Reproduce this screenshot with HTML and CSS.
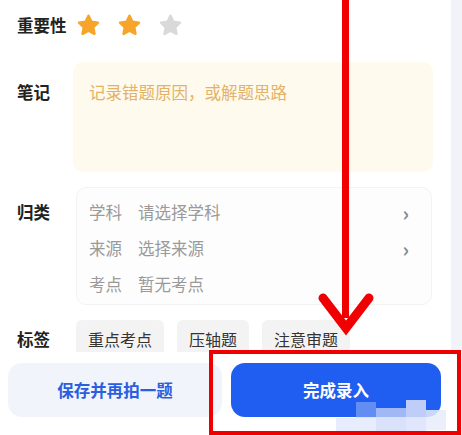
FILE: index.html
```html
<!DOCTYPE html>
<html lang="zh-CN">
<head>
    <meta charset="UTF-8">
    <title>错题录入</title>
    <link rel="stylesheet" href="styles.css">
</head>
<body>
    <div class="page">
        <div class="form">
            <!-- 重要性 -->
            <div class="row row-stars">
                <div class="label">重要性</div>
                <div class="stars">
                    <svg class="star on" viewBox="0 0 24 24"><path d="M12 2.6l2.8 5.9 6.3.8-4.6 4.4 1.2 6.3L12 16.9 6.3 20l1.2-6.3L2.9 9.3l6.3-.8z"/></svg>
                    <svg class="star on" viewBox="0 0 24 24"><path d="M12 2.6l2.8 5.9 6.3.8-4.6 4.4 1.2 6.3L12 16.9 6.3 20l1.2-6.3L2.9 9.3l6.3-.8z"/></svg>
                    <svg class="star" viewBox="0 0 24 24"><path d="M12 2.6l2.8 5.9 6.3.8-4.6 4.4 1.2 6.3L12 16.9 6.3 20l1.2-6.3L2.9 9.3l6.3-.8z"/></svg>
                </div>
            </div>

            <!-- 笔记 -->
            <div class="row row-note">
                <div class="label">笔记</div>
                <div class="note-box">记录错题原因，或解题思路</div>
            </div>

            <!-- 归类 -->
            <div class="row row-class">
                <div class="label">归类</div>
                <div class="class-box">
                    <div class="class-item"><span class="key">学科</span><span class="val">请选择学科</span><span class="arrow">&#8250;</span></div>
                    <div class="class-item"><span class="key">来源</span><span class="val">选择来源</span><span class="arrow">&#8250;</span></div>
                    <div class="class-item"><span class="key">考点</span><span class="val">暂无考点</span></div>
                </div>
            </div>

            <!-- 标签 -->
            <div class="row row-tags">
                <div class="label">标签</div>
                <div class="tags">
                    <span class="tag">重点考点</span>
                    <span class="tag">压轴题</span>
                    <span class="tag">注意审题</span>
                </div>
            </div>
        </div>
        <div class="side"></div>
    </div>

    <div class="bottom-bar">
        <button class="btn btn-light">保存并再拍一题</button>
        <button class="btn btn-primary">完成录入</button>
    </div>

    <div class="mosaic">
        <span class="m1"></span><span class="m2"></span><span class="m3"></span><span class="m4"></span><span class="m5"></span>
    </div>

    <!-- 标注 -->
    <div class="mark-line"></div>
    <svg class="mark-head" viewBox="0 0 56 44"><path d="M5 6 L28 36 L51 6" fill="none" stroke="#f00000" stroke-width="9" stroke-linecap="round"/></svg>
    <div class="mark-box"></div>
</body>
</html>
```

FILE: styles.css
```css
body {
    margin: 0;
    font-family: "Noto Sans CJK SC", "Noto Sans", sans-serif;
    background: #fff;
    color: #222;
    width: 462px;
    height: 435px;
    overflow: hidden;
    position: relative;
}
.page {
    display: flex;
    height: 435px;
}
.form {
    width: 451px;
    padding-left: 17px;
    box-sizing: border-box;
}
.side {
    flex: 1;
    background: #f2f3f8;
}
.row {
    display: flex;
}
.label {
    width: 59px;
    flex-shrink: 0;
    font-size: 16.5px;
    font-weight: bold;
    color: #222;
    line-height: 22px;
}
.row-stars {
    align-items: center;
    height: 50px;
}
.stars {
    display: flex;
    gap: 16px;
    margin-left: 0;
}
.star {
    width: 25px;
    height: 25px;
    fill: #d9d9d9;
    stroke: #d9d9d9;
    stroke-width: 2.4;
    stroke-linejoin: round;
}
.star.on {
    fill: #f6a52a;
    stroke: #f6a52a;
}
.row-note {
    margin-top: 12px;
}
.row-note .label {
    padding-top: 19px;
}
.note-box {
    width: 360px;
    height: 110px;
    margin-left: -3px;
    box-sizing: border-box;
    background: #fffaee;
    border-radius: 10px;
    padding: 18px 16px;
    font-size: 16.5px;
    line-height: 24px;
    color: #e3b266;
}
.row-class {
    margin-top: 15px;
}
.row-class .label {
    padding-top: 14px;
}
.class-box {
    width: 356px;
    height: 118px;
    box-sizing: border-box;
    border: 1px solid #f3f3f3;
    background: #fdfdfd;
    border-radius: 10px;
    padding: 6px 12px 0 12px;
}
.class-item {
    display: flex;
    align-items: center;
    height: 36px;
    font-size: 16.5px;
    color: #9a9a9a;
}
.class-item .key {
    width: 49px;
}
.class-item .val {
    flex: 1;
}
.class-item .arrow {
    font-size: 20px;
    font-weight: bold;
    color: #8a8a8a;
    margin-right: 10px;
}
.row-tags {
    margin-top: 15px;
    align-items: center;
}
.tags {
    display: flex;
    gap: 13px;
}
.tag {
    background: #f3f3f3;
    border-radius: 6px;
    padding: 0 12px;
    height: 38px;
    line-height: 38px;
    font-size: 16px;
    color: #333;
}
.bottom-bar {
    position: absolute;
    left: 0;
    right: 0;
    bottom: 0;
    height: 83px;
    box-sizing: border-box;
    background: #fff;
    display: flex;
    align-items: center;
    padding: 0 21px 7px 8px;
    gap: 9px;
}
.btn {
    flex: 1;
    height: 54px;
    border: none;
    border-radius: 14px;
    font-family: inherit;
    font-size: 16.5px;
    font-weight: bold;
}
.btn-light {
    background: #f1f4fa;
    color: #2a5fe0;
    flex: 0 0 214px;
}
.btn-primary {
    background: #1f5ef0;
    color: #fff;
}
.mosaic {
    position: absolute;
    left: 336px;
    top: 400px;
    width: 110px;
    height: 35px;
}
.mosaic span {
    position: absolute;
    background: rgba(225, 232, 252, 0.8);
}
.mosaic .m1 { left: 0; top: 18px; width: 40px; height: 17px; }
.mosaic .m2 { left: 40px; top: 8px; width: 30px; height: 27px; background: rgba(205, 215, 248, 0.75); }
.mosaic .m3 { left: 70px; top: 0; width: 20px; height: 35px; background: rgba(218, 226, 250, 0.85); }
.mosaic .m4 { left: 90px; top: 10px; width: 20px; height: 20px; background: rgba(232, 236, 252, 0.85); }
.mosaic .m5 { left: 20px; top: 2px; width: 20px; height: 16px; background: rgba(180, 200, 245, 0.45); }
.mark-line {
    position: absolute;
    left: 342px;
    top: 0;
    width: 7px;
    height: 318px;
    background: #f00000;
}
.mark-head {
    position: absolute;
    left: 318px;
    top: 292px;
    width: 56px;
    height: 44px;
}
.mark-box {
    position: absolute;
    left: 209px;
    top: 350px;
    width: 244px;
    height: 77px;
    border: 4px solid #ee0000;
}
```
